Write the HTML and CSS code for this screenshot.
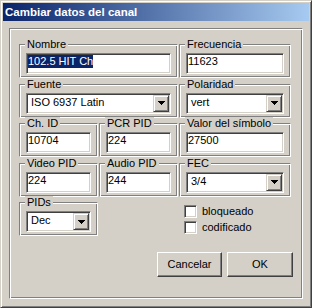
FILE: index.html
```html
<!DOCTYPE html>
<html lang="es">
<head>
    <meta charset="UTF-8">
    <title>Cambiar datos del canal</title>
    <link rel="stylesheet" href="styles.css">
</head>
<body>
    <div class="window">
        <div class="titlebar">Cambiar datos del canal</div>
        <div class="panel">
            <div class="grid">
                <div class="group span2">
                    <div class="legend">Nombre</div>
                    <div class="field"><span class="sel">102.5 HIT Ch</span></div>
                </div>
                <div class="group">
                    <div class="legend">Frecuencia</div>
                    <div class="field">11623</div>
                </div>

                <div class="group span2">
                    <div class="legend">Fuente</div>
                    <div class="combo">
                        <span class="combo-text">ISO 6937 Latin</span>
                        <span class="drop"><svg width="7" height="4" viewBox="0 0 7 4"><polygon points="0,0 7,0 3.5,4" fill="#000"/></svg></span>
                    </div>
                </div>
                <div class="group">
                    <div class="legend">Polaridad</div>
                    <div class="combo">
                        <span class="combo-text">vert</span>
                        <span class="drop"><svg width="7" height="4" viewBox="0 0 7 4"><polygon points="0,0 7,0 3.5,4" fill="#000"/></svg></span>
                    </div>
                </div>

                <div class="group">
                    <div class="legend">Ch. ID</div>
                    <div class="field">10704</div>
                </div>
                <div class="group">
                    <div class="legend">PCR PID</div>
                    <div class="field">224</div>
                </div>
                <div class="group">
                    <div class="legend">Valor del símbolo</div>
                    <div class="field">27500</div>
                </div>

                <div class="group">
                    <div class="legend">Video PID</div>
                    <div class="field">224</div>
                </div>
                <div class="group">
                    <div class="legend">Audio PID</div>
                    <div class="field">244</div>
                </div>
                <div class="group">
                    <div class="legend">FEC</div>
                    <div class="combo">
                        <span class="combo-text">3/4</span>
                        <span class="drop"><svg width="7" height="4" viewBox="0 0 7 4"><polygon points="0,0 7,0 3.5,4" fill="#000"/></svg></span>
                    </div>
                </div>

                <div class="group">
                    <div class="legend">PIDs</div>
                    <div class="combo">
                        <span class="combo-text">Dec</span>
                        <span class="drop"><svg width="7" height="4" viewBox="0 0 7 4"><polygon points="0,0 7,0 3.5,4" fill="#000"/></svg></span>
                    </div>
                </div>
                <div class="checks">
                    <label class="check"><span class="box"></span>bloqueado</label>
                    <label class="check"><span class="box"></span>codificado</label>
                </div>
            </div>
            <div class="buttons">
                <div class="btn cancel">Cancelar</div>
                <div class="btn ok">OK</div>
            </div>
        </div>
    </div>
</body>
</html>
```

FILE: styles.css
```css
body { margin: 0; font-family: "Liberation Sans", Arial, sans-serif; font-size: 11px; color: #000; background: #d4d0c8; }
.window { width: 312px; height: 308px; box-sizing: border-box; border: 1px solid; border-color: #d4d0c8 #404040 #404040 #d4d0c8; background: #d4d0c8; }
.window { display: flex; flex-direction: column; padding: 2px; box-shadow: inset 1px 1px #fff, inset -1px -1px #808080; }
.titlebar { height: 18px; line-height: 18px; padding-left: 2px; color: #fff; font-weight: bold; font-size: 11.5px; background: linear-gradient(to right, #0a246a, #a6caf0); }
.panel { flex: 1; margin: 7px 6px 6px 6px; padding: 15px 9px 0 9px; border: 1px solid; border-color: #808080 #fff #fff #808080; box-shadow: inset 1px 1px #fff, inset -1px -1px #808080; }
.grid { display: grid; grid-template-columns: 79px 79px 112px; grid-auto-rows: 34px; column-gap: 1px; row-gap: 5.5px; }
.span2 { grid-column: span 2; }
.group { box-sizing: border-box; padding: 0 6px; border: 1px solid; border-color: #808080 #fff #fff #808080; box-shadow: inset 1px 1px #fff, inset -1px -1px #808080; }
.legend { width: fit-content; margin: -7px 0 0 -1px; padding: 0 2px; line-height: 13px; background: #d4d0c8; }
.field, .combo { box-sizing: border-box; height: 21px; margin-top: 2px; padding: 1px; background: #fff; line-height: 13px; white-space: nowrap; border: 1px solid; border-color: #808080 #fff #fff #808080; box-shadow: inset 1px 1px #404040, inset -1px -1px #d4d0c8; }
.sel { display: inline-block; line-height: 13px; background: #0a246a; color: #fff; }
.combo { display: flex; justify-content: space-between; }
.combo-text { padding: 1px 0 0 3px; }
.drop { box-sizing: border-box; width: 16px; height: 17px; display: flex; align-items: center; justify-content: center; background: #d4d0c8; border: 1px solid; border-color: #d4d0c8 #404040 #404040 #d4d0c8; box-shadow: inset 1px 1px #fff, inset -1px -1px #808080; }
.drop svg { display: block; shape-rendering: crispEdges; }
.checks { grid-column: 3; padding: 1px 0 0 5px; }
.check { display: flex; align-items: center; gap: 5px; height: 16px; }
.box { box-sizing: border-box; width: 13px; height: 13px; background: #fff; border: 1px solid; border-color: #808080 #fff #fff #808080; box-shadow: inset 1px 1px #404040, inset -1px -1px #d4d0c8; }
.buttons { display: flex; justify-content: flex-end; gap: 5px; margin-top: 16px; }
.btn { box-sizing: border-box; height: 25px; line-height: 23px; text-align: center; border: 1px solid; border-color: #fff #404040 #404040 #fff; box-shadow: inset -1px -1px #808080; }
.cancel { width: 65px; }
.ok { width: 66px; }
```
